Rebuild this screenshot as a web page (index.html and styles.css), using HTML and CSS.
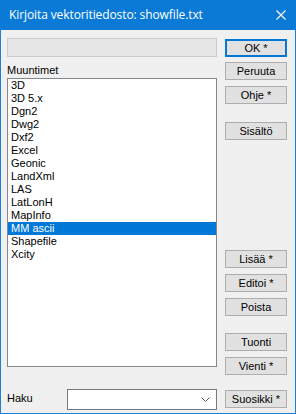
FILE: index.html
```html
<!DOCTYPE html>
<html lang="fi">
<head>
<meta charset="utf-8">
<title>Kirjoita vektoritiedosto</title>
<link rel="stylesheet" href="styles.css">
</head>
<body>
<div class="window">
  <div class="titlebar">
    <span class="title">Kirjoita vektoritiedosto: showfile.txt</span>
    <svg class="close" width="10" height="10" viewBox="0 0 10 10"><path d="M0.5 0.5 L9.5 9.5 M9.5 0.5 L0.5 9.5" stroke="#fff" stroke-width="1.1" fill="none"/></svg>
  </div>
  <div class="content">
    <div class="left">
      <div class="pathbox"></div>
      <div class="label">Muuntimet</div>
      <ul class="list">
        <li>3D</li>
        <li>3D 5.x</li>
        <li>Dgn2</li>
        <li>Dwg2</li>
        <li>Dxf2</li>
        <li>Excel</li>
        <li>Geonic</li>
        <li>LandXml</li>
        <li>LAS</li>
        <li>LatLonH</li>
        <li>MapInfo</li>
        <li class="selected">MM ascii</li>
        <li>Shapefile</li>
        <li>Xcity</li>
      </ul>
      <div class="search">
        <span class="search-label">Haku</span>
        <div class="combo">
          <svg class="chevron" width="9" height="5" viewBox="0 0 9 5"><path d="M0.5 0.5 L4.5 4.5 L8.5 0.5" stroke="#555" stroke-width="1" fill="none"/></svg>
        </div>
      </div>
    </div>
    <div class="right">
      <button class="btn default b-ok">OK *</button>
      <button class="btn b-peruuta">Peruuta</button>
      <button class="btn b-ohje">Ohje *</button>
      <button class="btn b-sisalto">Sisältö</button>
      <button class="btn b-lisaa">Lisää *</button>
      <button class="btn b-editoi">Editoi *</button>
      <button class="btn b-poista">Poista</button>
      <button class="btn b-tuonti">Tuonti</button>
      <button class="btn b-vienti">Vienti *</button>
      <button class="btn b-suosikki">Suosikki *</button>
    </div>
  </div>
</div>
</body>
</html>
```

FILE: styles.css
```css
* { box-sizing: border-box; }
html, body { margin: 0; padding: 0; }
body { width: 296px; height: 414px; overflow: hidden; background: #f0f0f0; }

.window {
  width: 296px;
  height: 414px;
  border: 1px solid #1a81d6;
  border-top: none;
  background: #f0f0f0;
  display: flex;
  flex-direction: column;
  font-family: "Liberation Sans", Arial, sans-serif;
  font-size: 11px;
  color: #000;
}

.titlebar {
  height: 30px;
  background: #0a7ad6;
  margin: 0 -1px;
  display: flex;
  align-items: center;
  justify-content: space-between;
  padding: 0 10px 0 9px;
}
.title {
  color: #fff;
  font-family: "Open Sans", "Noto Sans", sans-serif;
  font-size: 12px;
  letter-spacing: -0.1px;
  margin-top: -1px;
}
.close { margin-right: 0; }

.content {
  display: flex;
  padding: 8px 7px 0 6px;
  gap: 8px;
}

.left { width: 210px; display: flex; flex-direction: column; }

.pathbox {
  height: 19px;
  background: #e6e6e6;
  border: 1px solid #cccccc;
}

.label { margin-top: 7px; height: 14px; line-height: 13px; padding-left: 0; }

.list {
  list-style: none;
  margin: 0;
  padding: 0;
  height: 289px;
  background: #fff;
  border: 1px solid #828790;
}
.list li {
  height: 13px;
  line-height: 13px;
  padding-left: 3px;
  white-space: nowrap;
}
.list li.selected { background: #0078d7; color: #fff; }

.search {
  margin-top: 22px;
  display: flex;
  align-items: center;
}
.search-label { width: 60px; margin-top: -4px; }
.combo {
  width: 150px;
  height: 21px;
  background: #fff;
  border: 1px solid #7a7a7a;
  display: flex;
  align-items: center;
  justify-content: flex-end;
  padding-right: 6px;
}

.right { width: 62px; display: flex; flex-direction: column; }

.btn {
  height: 18px;
  padding: 0;
  background: #e1e1e1;
  border: 1px solid #adadad;
  font-family: "Liberation Sans", Arial, sans-serif;
  font-size: 11px;
  color: #000;
  line-height: 14px;
  text-align: center;
}
.btn.default { border: 2px solid #0078d7; line-height: 12px; }

.b-ok { margin-top: 1px; }
.b-peruuta { margin-top: 5px; }
.b-ohje { margin-top: 6px; }
.b-sisalto { margin-top: 18px; }
.b-lisaa { margin-top: 110px; }
.b-editoi { margin-top: 6px; }
.b-poista { margin-top: 6px; }
.b-tuonti { margin-top: 17px; }
.b-vienti { margin-top: 6px; }
.b-suosikki { margin-top: 15px; }
```
